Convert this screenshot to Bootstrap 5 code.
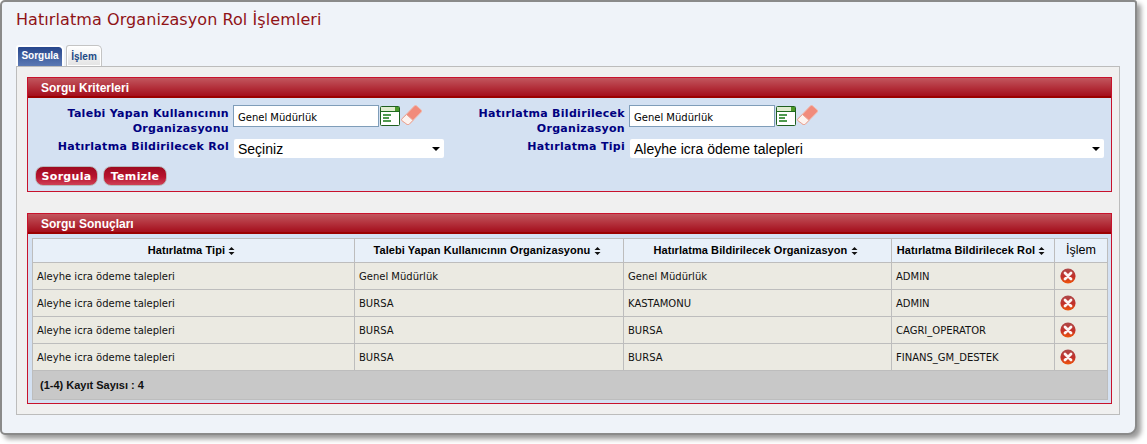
<!DOCTYPE html>
<html lang="tr">
<head>
<meta charset="utf-8">
<title>Hatırlatma Organizasyon Rol İşlemleri</title>
<link rel="stylesheet" href="https://cdn.jsdelivr.net/npm/bootstrap@5.3.0/dist/css/bootstrap.min.css">
<style>
html,body{background:#fff;margin:0;font-family:"DejaVu Sans",sans-serif;height:444px;overflow:hidden}
.shell{width:1137px;height:435px;background:#eff3f9;border:2px solid #8a8a8a;border-radius:5px 3px 9px 5px;box-shadow:4px 4px 5px #9a9a9a;padding:8px 15px 0 14px}
.page-title{font-family:"DejaVu Sans",sans-serif;font-size:16px;font-weight:400;color:#8f1216;line-height:20px;margin:0 0 15px 0;height:20px;letter-spacing:.08px}
.tabstrip{height:21px;padding-left:0;gap:2px;align-items:flex-end}
.tabbtn{font-family:"Liberation Sans",sans-serif;font-size:10px;font-weight:700;line-height:14px;text-align:center;border-radius:3px 5px 0 0}
.tab-on{width:48px;height:21px;border:2px solid #fff;border-bottom:0;background:linear-gradient(#27468c,#5b79b4);background-clip:padding-box;color:#fff;padding-top:2px}
.tab-off{width:36px;height:21px;border:1px solid #c4c4c4;border-bottom:0;background:linear-gradient(#fff,#e3e3e3);color:#1d4a86;padding-top:4px;box-shadow:inset 0 0 0 1px #fff}
.tabbox{width:1104px;height:349px;background:#f0f0f0;border:1px solid #bcbcbc;padding:10px 7px 0 10px}
.boxa{border:1px solid #c8122c;background:#d4e1f2}
.boxa-head{height:20px;background:linear-gradient(#c2565e,#a50e1c 90%,#9b0000 90%);color:#fff;font-family:"Liberation Sans",sans-serif;font-weight:700;font-size:12px;line-height:20px;padding-left:13px}
.query{height:115px}
.results{height:191px;margin-top:21px}
.filter{display:grid;grid-template-columns:201px 4px 217px 175px 4px 483px;grid-template-rows:33px 24px;padding-top:7px}
.lbl{font-family:"DejaVu Sans",sans-serif;font-weight:700;font-size:11px;line-height:15px;color:#000080;text-align:right;letter-spacing:.3px;margin-top:1px}
.lbl-2{grid-column:4}
.fld{display:flex;align-items:flex-start;gap:1px}
.fld-txt{width:146px;height:22px;border:1px solid #7f9db9;background:#fff;font-family:"DejaVu Sans",sans-serif;font-size:10px;line-height:23px;padding:0 4px;color:#000;border-radius:0;flex:none}
.ic-win{margin-top:1px}
.sel{display:block;height:19px;border:0;border-radius:2px;padding:1px 20px 0 4px;background-color:#fff;background-image:url("data:image/svg+xml,%3Csvg xmlns='http://www.w3.org/2000/svg' width='8' height='4'%3E%3Cpath d='M0 0h8L4 4z' fill='%23000'/%3E%3C/svg%3E");background-repeat:no-repeat;background-position:right 4px center;background-size:8px 4px;font-family:"Liberation Sans",sans-serif;font-size:14px;line-height:18px;color:#000;margin:1px 0 0 1px;appearance:none;-webkit-appearance:none}
.sel-a{width:210px}
.sel-b{width:474px}
.btnrow{padding:4px 0 0 7px;gap:5px}
.redbtn{height:20px;padding:0;border:1px solid #b9babb;border-radius:8px;background:linear-gradient(#9d0a20,#b8142f 55%,#cf4056);color:#fff;font-family:"DejaVu Sans",sans-serif;font-weight:700;font-size:11px;line-height:17px;letter-spacing:.3px}
.btn-a{width:63px}
.btn-b{width:64px}
.tblwrap{padding:4px 4px 0 4px}
.grid-t{width:1075px;margin:0;table-layout:fixed;border-collapse:collapse;font-family:"DejaVu Sans",sans-serif;font-size:10px;color:#000}
.grid-t th,.grid-t td{border:1px solid #bdbdbd;padding:0 4px;vertical-align:middle;box-shadow:none}
.grid-t th{background:#e8f0f9;font-family:"Liberation Sans",sans-serif;font-weight:700;font-size:11px;text-align:center;height:24px;color:#000;letter-spacing:.07px;padding-right:8px}
.grid-t td{background:#ebeae2;height:27px;color:#111}
.grid-t .foot-cell{background:#c8c8c8;height:29px;font-family:"Liberation Sans",sans-serif;font-weight:700;font-size:11px;padding-left:7px;color:#111}
.grid-t .hd-plain{font-weight:400;font-size:12.5px;padding-right:4px}
.sorter{display:inline-block;vertical-align:-1px;margin-left:0}
.del{display:block;margin-left:1px;margin-top:-1px}
.col-a{width:322px}.col-b{width:269px}.col-c{width:268px}.col-d{width:163px}.col-e{width:53px}
</style>
</head>
<body>
<svg width="0" height="0" class="d-block" aria-hidden="true">
<defs>
<linearGradient id="rg" x1="0" y1="0" x2="0" y2="1"><stop offset="0" stop-color="#ad4a4a"/><stop offset=".55" stop-color="#c2302a"/><stop offset="1" stop-color="#f2580a"/></linearGradient>
<symbol id="sort" viewBox="0 0 7 8"><path d="M3.5 0 6.5 3H.5zM3.5 8 .5 5h6z" fill="#111"/></symbol>
<symbol id="win" viewBox="0 0 20 20"><rect x=".5" y=".5" width="19" height="19" rx="1" fill="#fff" stroke="#1f5f20"/><rect x="1" y="1" width="18" height="4" fill="#dfeccf"/><rect x="15" y="1" width="4" height="4" fill="#4c9a2a"/><path d="M1 5.500H19" stroke="#1f6b20"/><path d="M3 9H11M3 12H9M3 15H11" stroke="#167a16" stroke-width="1.400"/></symbol>
<symbol id="erase" viewBox="0 0 21 20"><path d="M.8 14 13.500.8q1-.6 2 0L20.300 5q.6 1 0 2L8 19.400q-1 .6-2 0L.8 15.500q-.5-.8 0-1.500z" fill="#f18b7b" stroke="#efb8ab"/><path d="M.8 14 5.500 9.500 12 15.300 8 19.400q-1 .6-2 0L.8 15.500q-.5-.8 0-1.500z" fill="#fdf3ef" stroke="#e8a596"/></symbol>
<symbol id="xc" viewBox="0 0 16 16"><circle cx="8" cy="8" r="7.600" fill="url(#rg)"/><path d="M5 5 11 11M11 5 5 11" stroke="#fff" stroke-opacity=".95" stroke-width="2.800" stroke-linecap="round"/></symbol>
</defs>
</svg>
<div class="shell">
  <h1 class="page-title">Hatırlatma Organizasyon Rol İşlemleri</h1>
  <div class="tabstrip d-flex">
    <div class="tabbtn tab-on">Sorgula</div>
    <div class="tabbtn tab-off">İşlem</div>
  </div>
  <div class="tabbox">
    <div class="boxa query">
      <div class="boxa-head">Sorgu Kriterleri</div>
      <div class="filter">
        <div class="lbl">Talebi Yapan Kullanıcının Organizasyonu</div>
        <div></div>
        <div class="fld"><div class="fld-txt">Genel Müdürlük</div><svg class="ic-win" width="20" height="20"><use href="#win"/></svg><svg width="21" height="20"><use href="#erase"/></svg></div>
        <div class="lbl lbl-2">Hatırlatma Bildirilecek Organizasyon</div>
        <div></div>
        <div class="fld"><div class="fld-txt">Genel Müdürlük</div><svg class="ic-win" width="20" height="20"><use href="#win"/></svg><svg width="21" height="20"><use href="#erase"/></svg></div>
        <div class="lbl">Hatırlatma Bildirilecek Rol</div>
        <div></div>
        <div><select class="sel sel-a"><option>Seçiniz</option></select></div>
        <div class="lbl lbl-2">Hatırlatma Tipi</div>
        <div></div>
        <div><select class="sel sel-b"><option>Aleyhe icra ödeme talepleri</option></select></div>
      </div>
      <div class="btnrow d-flex">
        <button type="button" class="btn redbtn btn-a">Sorgula</button>
        <button type="button" class="btn redbtn btn-b">Temizle</button>
      </div>
    </div>
    <div class="boxa results">
      <div class="boxa-head">Sorgu Sonuçları</div>
      <div class="tblwrap">
        <table class="grid-t">
          <colgroup><col class="col-a"><col class="col-b"><col class="col-c"><col class="col-d"><col class="col-e"></colgroup>
          <thead><tr>
            <th>Hatırlatma Tipi <svg class="sorter" width="7" height="8"><use href="#sort"/></svg></th>
            <th>Talebi Yapan Kullanıcının Organizasyonu <svg class="sorter" width="7" height="8"><use href="#sort"/></svg></th>
            <th>Hatırlatma Bildirilecek Organizasyon <svg class="sorter" width="7" height="8"><use href="#sort"/></svg></th>
            <th>Hatırlatma Bildirilecek Rol <svg class="sorter" width="7" height="8"><use href="#sort"/></svg></th>
            <th class="hd-plain">İşlem</th>
          </tr></thead>
          <tbody>
            <tr><td>Aleyhe icra ödeme talepleri</td><td>Genel Müdürlük</td><td>Genel Müdürlük</td><td>ADMIN</td><td><svg class="del" width="16" height="16"><use href="#xc"/></svg></td></tr>
            <tr><td>Aleyhe icra ödeme talepleri</td><td>BURSA</td><td>KASTAMONU</td><td>ADMIN</td><td><svg class="del" width="16" height="16"><use href="#xc"/></svg></td></tr>
            <tr><td>Aleyhe icra ödeme talepleri</td><td>BURSA</td><td>BURSA</td><td>CAGRI_OPERATOR</td><td><svg class="del" width="16" height="16"><use href="#xc"/></svg></td></tr>
            <tr><td>Aleyhe icra ödeme talepleri</td><td>BURSA</td><td>BURSA</td><td>FINANS_GM_DESTEK</td><td><svg class="del" width="16" height="16"><use href="#xc"/></svg></td></tr>
          </tbody>
          <tfoot><tr><td colspan="5" class="foot-cell">(1-4) Kayıt Sayısı : 4</td></tr></tfoot>
        </table>
      </div>
    </div>
  </div>
</div>
<script src="https://cdn.jsdelivr.net/npm/bootstrap@5.3.0/dist/js/bootstrap.bundle.min.js"></script>
</body>
</html>
